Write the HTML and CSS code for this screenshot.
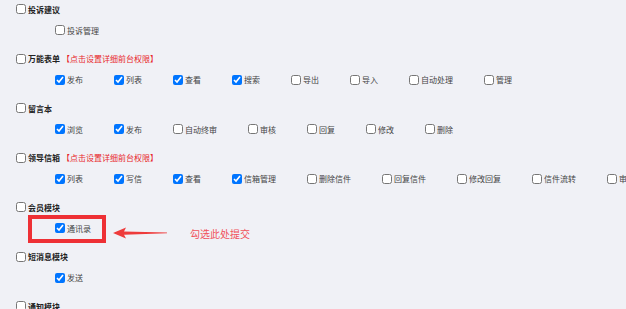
FILE: index.html
```html
<!DOCTYPE html>
<html>
<head>
  <meta charset="UTF-8">
  <title>权限设置</title>
  <link rel="stylesheet" href="styles.css">
</head>
<body>
  <div class="container">
    <div class="section">
      <label class="title"><input type="checkbox">投诉建议</label>
      <div class="perms">
        <label class="item"><input type="checkbox">投诉管理</label>
      </div>
    </div>

    <div class="section">
      <div class="title-row">
        <label class="title"><input type="checkbox">万能表单</label>
        <span class="hint">【点击设置详细前台权限】</span>
      </div>
      <div class="perms">
        <label class="item"><input type="checkbox" checked>发布</label>
        <label class="item"><input type="checkbox" checked>列表</label>
        <label class="item"><input type="checkbox" checked>查看</label>
        <label class="item"><input type="checkbox" checked>搜索</label>
        <label class="item"><input type="checkbox">导出</label>
        <label class="item"><input type="checkbox">导入</label>
        <label class="item"><input type="checkbox">自动处理</label>
        <label class="item"><input type="checkbox">管理</label>
      </div>
    </div>

    <div class="section">
      <label class="title"><input type="checkbox">留言本</label>
      <div class="perms">
        <label class="item"><input type="checkbox" checked>浏览</label>
        <label class="item"><input type="checkbox" checked>发布</label>
        <label class="item"><input type="checkbox">自动终审</label>
        <label class="item"><input type="checkbox">审核</label>
        <label class="item"><input type="checkbox">回复</label>
        <label class="item"><input type="checkbox">修改</label>
        <label class="item"><input type="checkbox">删除</label>
      </div>
    </div>

    <div class="section">
      <div class="title-row">
        <label class="title"><input type="checkbox">领导信箱</label>
        <span class="hint">【点击设置详细前台权限】</span>
      </div>
      <div class="perms">
        <label class="item"><input type="checkbox" checked>列表</label>
        <label class="item"><input type="checkbox" checked>写信</label>
        <label class="item"><input type="checkbox" checked>查看</label>
        <label class="item"><input type="checkbox" checked>信箱管理</label>
        <label class="item"><input type="checkbox">删除信件</label>
        <label class="item"><input type="checkbox">回复信件</label>
        <label class="item"><input type="checkbox">修改回复</label>
        <label class="item"><input type="checkbox">信件流转</label>
        <label class="item"><input type="checkbox">审核信件</label>
      </div>
    </div>

    <div class="section">
      <label class="title"><input type="checkbox">会员模块</label>
      <div class="perms marked">
        <label class="item"><input type="checkbox" checked>通讯录</label>
        <div class="mark-box"></div>
        <svg class="mark-arrow" width="60" height="16" viewBox="0 0 60 16">
          <polygon points="3,8 16,2.5 14,6.4 57,7.4 57,8.3 14,9.7 16,13.5" fill="#ee3b3b"/>
        </svg>
        <span class="mark-text">勾选此处提交</span>
      </div>
    </div>

    <div class="section">
      <label class="title"><input type="checkbox">短消息模块</label>
      <div class="perms">
        <label class="item"><input type="checkbox" checked>发送</label>
      </div>
    </div>

    <div class="section">
      <label class="title"><input type="checkbox">通知模块</label>
    </div>
  </div>
</body>
</html>
```

FILE: styles.css
```css
html, body {
  height: 309px;
  overflow: hidden;
}
body {
  margin: 0;
  background-color: #f0f1f6;
  font-family: "Noto Sans CJK SC", "Noto Sans", sans-serif;
  font-size: 8px;
  color: #333;
}
.container {
  display: flex;
  flex-direction: column;
  gap: 10.5px;
  padding-left: 16px;
}
.section {
  display: flex;
  flex-direction: column;
  gap: 3px;
}
.title-row {
  display: flex;
  align-items: center;
}
.title,
.item {
  display: inline-flex;
  align-items: center;
  height: 18px;
  white-space: nowrap;
  cursor: pointer;
}
.title {
  font-weight: bold;
  color: #222;
}
.title input,
.item input {
  width: 10px;
  height: 10px;
  margin: 0 2px 0 0;
}
.hint {
  margin-left: 2px;
  color: #e8262b;
}
.perms {
  display: flex;
  align-items: center;
  height: 18px;
  padding-left: 39px;
  white-space: nowrap;
}
.item {
  margin-right: 31px;
  color: #444;
}
.marked {
  position: relative;
}
.mark-box {
  position: absolute;
  left: 12px;
  top: -4px;
  width: 70px;
  height: 20px;
  border: 4px solid #ee3035;
}
.mark-arrow {
  position: absolute;
  left: 94px;
  top: 6px;
}
.mark-text {
  position: absolute;
  left: 174px;
  top: 7px;
  font-size: 10px;
  line-height: 16px;
  color: #f0525c;
}
```
